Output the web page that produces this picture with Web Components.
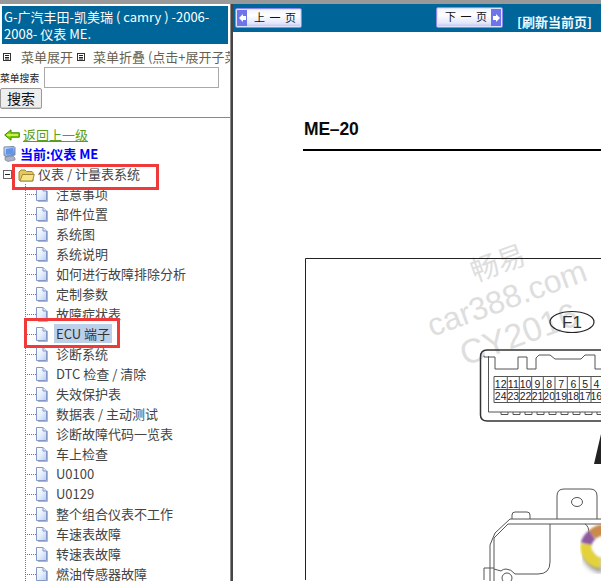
<!DOCTYPE html>
<html lang="zh"><head><meta charset="utf-8"><title>仪表 ME</title>
<style>
html,body{margin:0;padding:0;background:#fff}
body{font-family:"Noto Sans CJK SC","Liberation Sans",sans-serif;width:601px;height:581px;overflow:hidden}
</style></head><body>
<x-app>
  <x-sidebar slot="side" title-a="G-广汽丰田-凯美瑞 ( camry ) -2006-" title-b="2008- 仪表 ME.">
    <x-tree-item>注意事项</x-tree-item>
    <x-tree-item>部件位置</x-tree-item>
    <x-tree-item>系统图</x-tree-item>
    <x-tree-item>系统说明</x-tree-item>
    <x-tree-item>如何进行故障排除分析</x-tree-item>
    <x-tree-item>定制参数</x-tree-item>
    <x-tree-item>故障症状表</x-tree-item>
    <x-tree-item selected>ECU 端子</x-tree-item>
    <x-tree-item>诊断系统</x-tree-item>
    <x-tree-item>DTC 检查 / 清除</x-tree-item>
    <x-tree-item>失效保护表</x-tree-item>
    <x-tree-item>数据表 / 主动测试</x-tree-item>
    <x-tree-item>诊断故障代码一览表</x-tree-item>
    <x-tree-item>车上检查</x-tree-item>
    <x-tree-item>U0100</x-tree-item>
    <x-tree-item>U0129</x-tree-item>
    <x-tree-item>整个组合仪表不工作</x-tree-item>
    <x-tree-item>车速表故障</x-tree-item>
    <x-tree-item>转速表故障</x-tree-item>
    <x-tree-item>燃油传感器故障</x-tree-item>
  </x-sidebar>
  <x-doc slot="main"></x-doc>
</x-app>
<script>
(function(){
function tpl(html){const t=document.createElement('template');t.innerHTML=html;return t}
function def(name,t,init){customElements.define(name,class extends HTMLElement{
  constructor(){super();this.attachShadow({mode:'open'}).appendChild(t.content.cloneNode(true));}
  connectedCallback(){if(init)init.call(this,this.shadowRoot)}
})}

def('x-app',tpl(`<style>
:host{display:grid;grid-template-rows:4px 577px;grid-template-columns:230px 3px 368px;width:601px;height:581px;overflow:hidden;background:#fff}
.top{grid-column:1/-1;background:#999}
.div{background:linear-gradient(to right,#8a8a8a 0 1px,#444 1px 3px)}
</style><div class="top"></div><slot name="side"></slot><div class="div"></div><slot name="main"></slot>`));

const ICONS={
 menu:`<svg width="8" height="8" viewBox="0 0 8 8"><rect x=".5" y=".5" width="7" height="7" fill="#fff" stroke="#333"/><path d="M2 2.5h4M2 4.5h4M2 6h4" stroke="#222"/></svg>`,
 back:`<svg width="16" height="12" viewBox="0 0 16 12"><path d="M.7 6 7 .8v3h8.3v4.4H7v3z" fill="#8fd400" stroke="#2f8f00"/><path d="M3 6h11" stroke="#e0f76b" stroke-width="1.500"/></svg>`,
 pc:`<svg width="13" height="16" viewBox="0 0 13 16"><defs><linearGradient id="g" x1="0" y1="0" x2="1" y2="1"><stop offset="0" stop-color="#dfeaff"/><stop offset="1" stop-color="#4a7fd8"/></linearGradient></defs><path d="M1 1 11 .5l1 1V9l-9 1.5-2-1z" fill="url(#g)" stroke="#7c8aa8"/><path d="M3 3l7-1v5.5l-7 1z" fill="#5f95e8"/><path d="M2 11l8-1 2 2v2l-7 1.500-3-1.500z" fill="#aab4c8" stroke="#6b7690" stroke-width=".6"/></svg>`,
 folder:`<svg width="17" height="13" viewBox="0 0 17 13"><path d="M1 3 3 1h4l1.500 1.500H14l1 1V12H2l-1-1z" fill="#e6c758" stroke="#a08a3a"/><path d="M2 12 4.500 5.500h11.800L14.500 12z" fill="#f8e488" stroke="#a08a3a"/></svg>`,
 page:`<svg width="12" height="15" viewBox="0 0 12 15"><defs><linearGradient id="p" x1="0" y1="0" x2="1" y2="1"><stop offset="0" stop-color="#fff"/><stop offset=".5" stop-color="#e6effc"/><stop offset="1" stop-color="#b6cef2"/></linearGradient></defs><path d="M2 14.500h9.500V4" fill="none" stroke="#b4b4bc"/><path d="M.5.500H7L10.500 4v9.500H.5z" fill="url(#p)" stroke="#8398c8"/><path d="M7 .5V4h3.500" fill="#dbe6f7" stroke="#8398c8"/></svg>`
};

def('x-sidebar',tpl(`<style>
:host{display:block;height:577px;overflow:hidden;position:relative;background:#fff;font:13px/20px "Noto Sans CJK SC","Liberation Sans",sans-serif;color:#444}
.title{margin:2px 2px 0;width:226px;height:38px;box-sizing:border-box;background:#006699;color:#fff;padding:2px 2px 0;font-size:13px;line-height:17px;white-space:nowrap}
.title div{height:17px}
.menu{display:flex;align-items:center;white-space:nowrap;overflow:hidden;height:20px;margin-top:3px;padding-left:3px;color:#665f50}
.menu span{margin-left:10px}
.menu span.f{margin-left:8px}
.search{display:flex;align-items:center;height:21px}
.search label{font-size:9.800px;width:44px;color:#222;white-space:nowrap}
.search i{display:block;width:175px;height:21px;border:1px solid #a9a9a9;box-sizing:border-box;background:#fff}
.btn{display:block;width:42px;height:21px;box-sizing:border-box;background:#eee;border:1px solid #999;border-radius:2px;font:14px/19px "Noto Sans CJK SC",sans-serif;color:#111;text-align:center;box-shadow:inset 0 -1px #ccc}
hr{border:0;height:1px;background:#888;margin:8px 0 0}
.back{display:flex;align-items:center;height:20px;margin-top:7px;padding-left:4px;gap:3px}
.back a{color:#5a9e1a;text-decoration:underline}
.cur{display:flex;align-items:center;height:18px;padding-left:3px;gap:4px;color:#0000ff;font-weight:700}
.root{display:flex;align-items:center;height:20px;margin-top:1px;padding-left:3px}
.minus{width:9px;height:9px;box-sizing:border-box;border:1px solid #666;position:relative;background:#fff;flex:none;margin-top:1px}
.minus::after{content:"";position:absolute;left:1px;right:1px;top:3px;height:1px;background:#222}
.folder{display:flex;margin-left:6px;margin-top:2px}
.rt{margin-left:3px}
.mark{position:absolute;border:3px solid #f03a3a;box-sizing:border-box;pointer-events:none}
</style>
<div class="title"><div id="t1"></div><div id="t2"></div></div>
<div class="menu"><span id="i1" style="margin:0;display:flex"></span><span>菜单展开</span><span id="i2" style="margin-left:4px;display:flex"></span><span class="f">菜单折叠 (点击+展开子菜单)</span></div>
<div class="search"><label>菜单搜索</label><i></i></div>
<div class="btn" role="button">搜索</div>
<hr>
<div class="back"><span id="i3" style="display:flex"></span><a>返回上一级</a></div>
<div class="cur"><span id="i4" style="display:flex"></span><span>当前:仪表 ME</span></div>
<div class="root"><div class="minus"></div><span id="i5" class="folder"></span><span class="rt">仪表 / 计量表系统</span></div>
<slot></slot>
<div class="mark" style="left:12px;top:160px;width:147px;height:26px"></div>
<div class="mark" style="left:24px;top:314px;width:96px;height:30px"></div>
`),function(r){
 r.getElementById('t1').textContent=this.getAttribute('title-a');
 r.getElementById('t2').textContent=this.getAttribute('title-b');
 r.getElementById('i1').innerHTML=ICONS.menu;r.getElementById('i2').innerHTML=ICONS.menu;
 r.getElementById('i3').innerHTML=ICONS.back;r.getElementById('i4').innerHTML=ICONS.pc;r.getElementById('i5').innerHTML=ICONS.folder;
});

def('x-tree-item',tpl(`<style>
:host{display:flex;height:20px;margin-left:25px;align-items:center;font:13px/19px "Noto Sans CJK SC","Liberation Sans",sans-serif;color:#444;white-space:nowrap}
.c{width:11px;height:20px;flex:none;background:repeating-linear-gradient(to bottom,#777 0 1px,transparent 1px 2px) 0 0/1px 100% no-repeat,repeating-linear-gradient(to right,#777 0 1px,transparent 1px 2px) 0 10px/100% 1px no-repeat}
#i{display:flex;margin-top:1px}
.l{margin-left:6px;padding:0 2px;align-self:flex-start}
:host([selected]) .l{background:#bcd0ea;color:#333}
</style><div class="c"></div><span id="i"></span><span class="l"><slot></slot></span>`),function(r){r.getElementById('i').innerHTML=ICONS.page});

def('x-nav-btn',tpl(`<style>
:host{display:block;width:67px;height:20px;box-sizing:border-box;border:1px solid #8a8ae6;border-radius:2px;background:linear-gradient(to bottom,#f0f2ff,#fff 35%,#e2e6fb 80%,#b9bdf0);box-shadow:inset 0 0 0 1px #dfe2ff;position:relative;font:11px/16px "Noto Sans CJK SC",sans-serif;color:#111;word-spacing:2px;white-space:nowrap}
:host([dir-left]){padding-left:18px}:host([dir-right]){padding-left:8px}
.a{position:absolute;top:1px;bottom:1px;width:10px;background:#6e74ea;display:flex;align-items:center;justify-content:center}
:host([dir-left]) .a{left:1px}:host([dir-right]) .a{right:1px}
svg{display:block}
</style><slot></slot><span class="a" id="a"></span>`),function(r){
 const left=this.hasAttribute('dir-left');
 r.getElementById('a').innerHTML=left?`<svg width="7" height="8" viewBox="0 0 7 8"><path d="M0 4 4 0v2h3v4H4v2z" fill="#fff"/></svg>`:`<svg width="7" height="8" viewBox="0 0 7 8"><path d="M7 4 3 0v2H0v4h3v2z" fill="#fff"/></svg>`;
});

def('x-doc',tpl(`<style>
:host{display:block;height:577px;overflow:hidden;background:#fff}
.bar{height:28px;background:#006699;display:flex;color:#fff}
x-nav-btn{flex:none}
.refresh{font:700 13px/16px "Noto Sans CJK SC",sans-serif;white-space:nowrap;color:#f4f8fb;margin-left:14px;margin-top:10px}
.page{padding:0 0 0 70px}
h1{margin:86px 0 0;font:700 17.500px/22px "Liberation Sans",sans-serif;color:#0a0a0a;letter-spacing:-.2px;padding-left:1px}
.rule{height:2px;background:#000;margin-top:9px}
x-diagram{margin:107px 0 0 2px}
</style>
<div class="bar">
 <x-nav-btn dir-left style="margin:4px 0 0 2px">上 一 页</x-nav-btn>
 <x-nav-btn dir-right style="margin:3px 0 0 134px;height:21px">下 一 页</x-nav-btn>
 <span class="refresh">[刷新当前页]</span>
</div>
<div class="page"><h1>ME–20</h1><div class="rule"></div><x-diagram></x-diagram></div>`));

const tops=['12','11','10','9','8','7','6','5','4'],bot=['24','23','22','21','20','19','18','17','16'];
const xs=[189,202.300,214.300,226.700,238.300,250,262.300,274.300,286,296.700];
let cells='';
tops.forEach((t,i)=>{const c=(xs[i]+xs[i+1])/2;cells+=`<text x="${c}" y="129.500" class="n">${t}</text><text x="${c}" y="142" class="n">${bot[i]}</text>`});
xs.forEach(x=>{cells+=`<path d="M${x} 118.500V144.500"/>`});
let teeth='';for(let i=0;i<9;i++){const x=196+i*12;teeth+=`<path d="M${x} 154v2.500h7V154"/>`}

def('x-diagram',tpl(`<style>
:host{display:block;width:296px;height:322px;position:relative;box-sizing:border-box}
svg{display:block;position:absolute;left:0;top:0;overflow:visible}
.l{fill:none;stroke:#333;stroke-width:1}
.t{fill:none;stroke:#555;stroke-width:1}
.n{font:10.500px "Liberation Sans",sans-serif;fill:#222;stroke:none;text-anchor:middle}
.wm{font-family:"Liberation Sans","Noto Sans CJK SC",sans-serif;fill:#dedede}
</style>
<svg width="296" height="322" viewBox="0 0 296 322">
 <defs>
  <filter id="b" x="-30%" y="-30%" width="160%" height="170%"><feGaussianBlur stdDeviation="1.300"/></filter>
  <filter id="s" x="-30%" y="-30%" width="160%" height="170%"><feGaussianBlur stdDeviation="2.500"/></filter>
 </defs>
 <g class="wm">
  <text x="170" y="24" font-size="28" transform="rotate(-20 170 24)" font-family="Noto Sans CJK SC">畅易</text>
  <text x="127" y="79" font-size="32" transform="rotate(-20 127 79)">car388.com</text>
  <text x="160" y="108" font-size="34" transform="rotate(-20 160 108)">CY2016</text>
 </g>
 <path d="M.5 322V.5H296" fill="none" stroke="#222"/>
 <ellipse cx="267" cy="64" rx="22" ry="10.500" fill="none" stroke="#222" stroke-width="1.200"/>
 <text x="267" y="70" style="font:17px 'Liberation Sans',sans-serif;fill:#333" text-anchor="middle">F1</text>
 <path class="l" d="M296 92H182q-6.500 0-6.500 7v58q0 6 7 6H296" style="stroke-width:1.500"/>
 <path class="t" d="M296 111h-6V97h-10l-4 4h-26l-5-4h-11l-3 3v11h-9V99h-9v12h-23V99h-11v-1.500M183.500 98v56h112.500"/>
 <g class="t">
  <path d="M189 118.500H296M189 131.500H296M189 144.500H296"/>${cells}${teeth}
 </g>
 <path d="M289 206 296 176V206z" fill="#222"/>
 <g class="t">
  <path d="M252 261v-23q0-7 7-7h26q7 0 7 7v23"/>
  <ellipse cx="272" cy="244" rx="5.500" ry="4.500"/>
  <path d="M207 261v-4q0-3 3-3h12q3 0 3 3v4"/>
  <path d="M296 261H205l-15 14-5 12v36"/>
  <path d="M296 266H203l-14 14v43"/>
  <path d="M245 266v38q0 12-12 12h-23q-4-5-9-5-3 0-5 2l-7-2M179 322v-12h10"/>
  <ellipse cx="202" cy="320" rx="5" ry="5"/>
  <path d="M280 266q4 2 4 10"/>
 </g>
 <path d="M282 295a17 17 0 0 0 16 15" fill="none" stroke="#999" stroke-width="10" filter="url(#s)"/>
 <g fill="none" stroke-width="11" filter="url(#b)">
  <path d="M298 272a17 17 0 0 0-11 5" stroke="#c98a4c"/>
  <path d="M287 277a17 17 0 0 0-6 9" stroke="#8d5aa0"/>
  <path d="M281 286a17 17 0 0 0 14 19" stroke="#e3d23a"/>
  <path d="M295 305h3" stroke="#d8cfa0"/>
 </g>
</svg>`));
})();
</script>
</body></html>
